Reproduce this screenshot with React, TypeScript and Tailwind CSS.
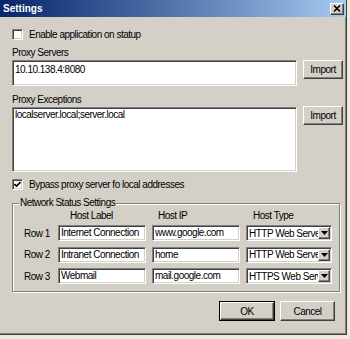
import React from "react";

const sunken =
  "border border-t-[#808080] border-l-[#808080] border-b-white border-r-white shadow-[inset_1px_1px_0_#404040,inset_-1px_-1px_0_#D4D0C8] bg-white";
const raised =
  "border border-t-white border-l-white border-b-[#404040] border-r-[#404040] shadow-[inset_-1px_-1px_0_#808080] bg-[#D4D0C8]";

const CheckBox: React.FC<{ checked?: boolean; label: string }> = ({ checked, label }) => (
  <div className="flex items-center h-[12px] gap-[6px]">
    <div className={`w-[11px] h-[11px] flex items-center justify-center ${sunken}`}>
      {checked && (
        <svg width="7" height="7" viewBox="0 0 7 7">
          <path d="M0.5 3 L2.5 5 L6.5 1" stroke="#000" strokeWidth="1.6" fill="none" />
        </svg>
      )}
    </div>
    <span>{label}</span>
  </div>
);

const TextBox: React.FC<{ value: string; className?: string }> = ({ value, className }) => (
  <div className={`${sunken} px-[2px] leading-[14px] overflow-hidden whitespace-nowrap ${className ?? ""}`}>
    {value}
  </div>
);

const Combo: React.FC<{ value: string }> = ({ value }) => (
  <div className={`${sunken} w-[86px] h-[16px] flex items-center pl-[2px] pr-[1px]`}>
    <span className="flex-1 overflow-hidden whitespace-nowrap leading-[13px]">{value}</span>
    <div className={`${raised} w-[12px] h-[12px] flex items-center justify-center shrink-0`}>
      <svg width="7" height="4" viewBox="0 0 7 4">
        <path d="M0 0 H7 L3.5 4 Z" fill="#000" />
      </svg>
    </div>
  </div>
);

const rows = [
  { name: "Row 1", label: "Internet Connection", ip: "www.google.com", type: "HTTP Web Server" },
  { name: "Row 2", label: "Intranet Connection", ip: "home", type: "HTTP Web Server" },
  { name: "Row 3", label: "Webmail", ip: "mail.google.com", type: "HTTPS Web Server" },
];

export default function App() {
  return (
    <div
      className="w-[350px] h-[339px] overflow-hidden bg-[#ECE9D8] text-[10px] tracking-[-0.5px] text-black"
      style={{ fontFamily: '"Liberation Sans", Arial, sans-serif' }}
    >
      <div className="w-[347px] h-[335px] bg-[#D4D0C8] border-r border-b border-r-[#404040] border-b-[#404040] shadow-[inset_-1px_-1px_0_#808080] flex flex-col">
        <div className="h-[17px] flex items-center justify-between pl-[3px] pr-[2px] bg-gradient-to-r from-[#0A246A] to-[#A6CAF0]">
          <span className="text-white font-bold tracking-normal">Settings</span>
          <div className={`${raised} w-[14px] h-[12px] flex items-center justify-center`}>
            <svg width="8" height="7" viewBox="0 0 8 7">
              <path d="M1 0.5 L7 6.5 M7 0.5 L1 6.5" stroke="#000" strokeWidth="1.6" />
            </svg>
          </div>
        </div>

        <div className="flex flex-col pl-[12px]">
          <div className="mt-[11px]">
            <CheckBox label="Enable application on statup" />
          </div>

          <div className="mt-[7px] leading-[12px]">Proxy Servers</div>
          <div className="mt-[1px] flex items-start gap-[6px]">
            <TextBox value="10.10.138.4:8080" className="w-[285px] h-[26px] pt-[2px]" />
            <button className={`${raised} w-[40px] h-[19px] leading-[12px]`}>Import</button>
          </div>

          <div className="mt-[8px] leading-[12px]">Proxy Exceptions</div>
          <div className="mt-[1px] flex items-start gap-[6px]">
            <TextBox value="localserver.local;server.local" className="w-[285px] h-[65px]" />
            <button className={`${raised} w-[40px] h-[19px] leading-[12px] -mt-[1px]`}>Import</button>
          </div>

          <div className="mt-[6px]">
            <CheckBox checked label="Bypass proxy server fo local addresses" />
          </div>

          <fieldset className="mt-[7px] w-[328px] border border-[#808080] shadow-[inset_1px_1px_0_white,1px_1px_0_white] px-0 pb-[7px]">
            <legend className="ml-[6px] px-[1px] leading-[12px] bg-[#D4D0C8]">Network Status Settings</legend>
            <div className="mt-[1px] h-[12px] leading-[12px] flex pl-[45px]">
              <span className="w-[94px] pl-[12px]">Host Label</span>
              <span className="w-[94px] pl-[6px]">Host IP</span>
              <span className="pl-[7px]">Host Type</span>
            </div>
            <div className="mt-[3px] flex flex-col gap-[5.5px]">
              {rows.map((r) => (
                <div key={r.name} className="flex items-center pl-[11px] h-[16px]">
                  <span className="w-[34px]">{r.name}</span>
                  <TextBox value={r.label} className="w-[88px] h-[16px]" />
                  <TextBox value={r.ip} className="w-[88px] h-[16px] ml-[6px]" />
                  <div className="ml-[6px]">
                    <Combo value={r.type} />
                  </div>
                </div>
              ))}
            </div>
          </fieldset>

          <div className="mt-[9px] flex justify-end gap-[5px] pr-[11px]">
            <button className="border border-black w-[56px] h-[20px]">
              <div className={`${raised} w-full h-full flex items-center justify-center`}>OK</div>
            </button>
            <button className={`${raised} w-[55px] h-[20px]`}>Cancel</button>
          </div>
        </div>
      </div>
    </div>
  );
}
